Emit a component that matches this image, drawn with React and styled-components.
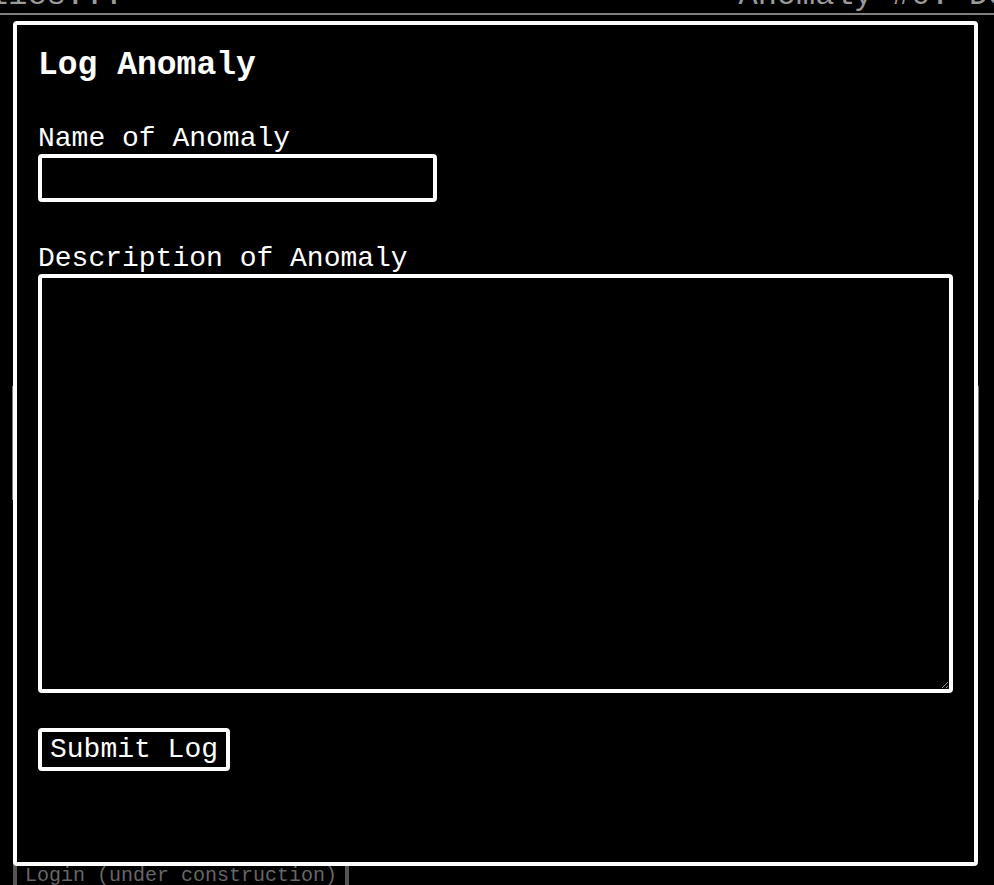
import React, { useState } from "react";
import styled, { createGlobalStyle } from "styled-components";

const mono = `"Courier New", "Liberation Mono", monospace`;

const GlobalStyle = createGlobalStyle`
  html, body {
    margin: 0;
    padding: 0;
    background: #000;
    overflow: hidden;
  }
  body {
    font-family: ${mono};
    color: #fff;
  }
`;

// page behind the modal
const Page = styled.div`
  height: 885px;
  overflow: hidden;
  display: flex;
  flex-direction: column;

  & > * {
    flex-shrink: 0;
  }
`;

const Ticker = styled.div`
  margin-top: -21px;
  display: flex;
  white-space: nowrap;
  font-size: 32px;
  line-height: 34px;
  color: #9a9a9a;
  border-bottom: 2px solid #808080;
  overflow: hidden;
`;

const TickerItem = styled.span`
  margin-left: ${(p) => p.offset}px;
  flex-shrink: 0;
`;

const EntryCard = styled.div`
  margin: 371px 15px 0 12px;
  height: 114px;
  border-left: 1px solid #777;
  border-right: 1px solid #777;
`;

const LoginButton = styled.div`
  align-self: flex-start;
  margin: 360px 0 0 13px;
  padding: 0 8px;
  border: 4px solid #555;
  font-size: 20px;
  color: #666;
  white-space: nowrap;
`;

// modal
const Modal = styled.div`
  position: fixed;
  top: 21px;
  left: 13px;
  width: 965px;
  height: 845px;
  box-sizing: border-box;
  background: #000;
  border: 4px solid #fff;
  border-radius: 4px;
  padding: 20px 21px;
`;

const Title = styled.h2`
  margin: 2px 0 0;
  font-size: 33px;
  font-weight: bold;
  line-height: normal;
`;

const Form = styled.form`
  display: flex;
  flex-direction: column;
  align-items: flex-start;
`;

const Label = styled.label`
  display: block;
  margin-top: ${(p) => p.gap}px;
  font-size: 28px;
  line-height: normal;
  color: #fff;
`;

const field = `
  box-sizing: border-box;
  display: block;
  background: #000;
  color: #fff;
  border: 4px solid #fff;
  border-radius: 4px;
  font-family: ${mono};
  font-size: 24px;
  outline: none;
  margin: 0;
`;

const TextInput = styled.input`
  ${field}
  width: 399px;
  height: 48px;
  padding: 0 8px;
`;

const TextArea = styled.textarea`
  ${field}
  width: 915px;
  height: 419px;
  padding: 8px;
`;

const SubmitButton = styled.button`
  box-sizing: border-box;
  margin-top: 35px;
  height: 43px;
  padding: 0 8px;
  background: #000;
  color: #fff;
  border: 4px solid #fff;
  border-radius: 4px;
  font-family: ${mono};
  font-size: 28px;
  line-height: normal;
  cursor: pointer;
`;

export default function App() {
  const [name, setName] = useState("");
  const [description, setDescription] = useState("");

  const handleSubmit = (e) => {
    e.preventDefault();
  };

  return (
    <>
      <GlobalStyle />
      <Page>
        <Ticker>
          <TickerItem offset={-107}>Anomalies:.:</TickerItem>
          <TickerItem offset={615}>Anomaly #0: Description</TickerItem>
        </Ticker>
        <EntryCard />
        <LoginButton>Login (under construction)</LoginButton>
      </Page>

      <Modal>
        <Title>Log Anomaly</Title>
        <Form onSubmit={handleSubmit}>
          <Label gap={39} htmlFor="anomaly-name">
            Name of Anomaly
          </Label>
          <TextInput
            id="anomaly-name"
            value={name}
            onChange={(e) => setName(e.target.value)}
          />
          <Label gap={41} htmlFor="anomaly-desc">
            Description of Anomaly
          </Label>
          <TextArea
            id="anomaly-desc"
            value={description}
            onChange={(e) => setDescription(e.target.value)}
          />
          <SubmitButton type="submit">Submit Log</SubmitButton>
        </Form>
      </Modal>
    </>
  );
}
